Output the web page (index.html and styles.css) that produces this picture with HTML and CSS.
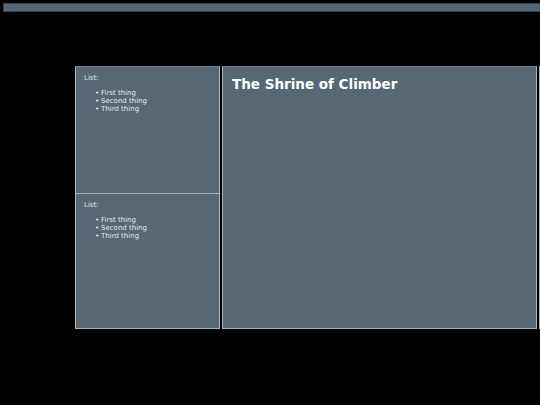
FILE: index.html
```html
<!doctype html>
<html>
  <head>
    <title>The Shrine of Climber</title>
    <link rel="stylesheet" href="styles.css">
  </head>
  <body>
    <header class="topbar"></header>

    <div class="layout">
      <aside class="sidebar">
        <section class="box">
          <p>List:</p>
          <ul>
            <li>First thing</li>
            <li>Second thing</li>
            <li>Third thing</li>
          </ul>
        </section>
        <section class="box">
          <p>List:</p>
          <ul>
            <li>First thing</li>
            <li>Second thing</li>
            <li>Third thing</li>
          </ul>
        </section>
      </aside>

      <main class="content">
        <h1>The Shrine of Climber</h1>
      </main>

      <aside class="extra"></aside>
    </div>
  </body>
</html>
```

FILE: styles.css
```css
:root {
  --panel: #566875;
  --edge: #a9b3bc;
  --text: #e3e8ec;
}

html, body {
  overflow: hidden;
}

body {
  margin: 0;
  background: #000;
  color: var(--text);
  font-family: 'DejaVu Sans', Verdana, sans-serif;
}

.topbar {
  margin: 3px 0 0 3px;
  height: 7px;
  background: var(--panel);
  border: 1px solid #38444e;
  border-right: none;
}

.layout {
  display: flex;
  gap: 2px;
  margin-top: 54px;
  padding-left: 75px;
  height: 263px;
}

.sidebar {
  flex: 0 0 145px;
  display: flex;
  flex-direction: column;
  background: var(--panel);
  border: 1px solid var(--edge);
  border-top-color: #6f7f8b;
  box-sizing: border-box;
}

.box {
  flex: 1;
  padding: 7px 8px;
  font-size: 7px;
}

.box + .box {
  border-top: 1px solid var(--edge);
  flex: 0 0 135px;
  box-sizing: border-box;
}

.box p {
  margin: 0 0 7px;
}

.box ul {
  margin: 0;
  padding-left: 17px;
  list-style: none;
}

/* small bullet sitting close to the item text */
.box li::before {
  content: "\2022";
  display: inline-block;
  width: 6px;
  margin-left: -6px;
}

.content {
  flex: 0 0 315px;
  background: var(--panel);
  border: 1px solid var(--edge);
  border-top-color: #6f7f8b;
  box-sizing: border-box;
  padding: 9px 9px;
}

.content h1 {
  margin: 0;
  font-size: 13.5px;
  font-weight: bold;
  color: #fff;
}

.extra {
  flex: 0 0 200px;
  background: var(--panel);
  border: 1px solid var(--edge);
  box-sizing: border-box;
}
```
